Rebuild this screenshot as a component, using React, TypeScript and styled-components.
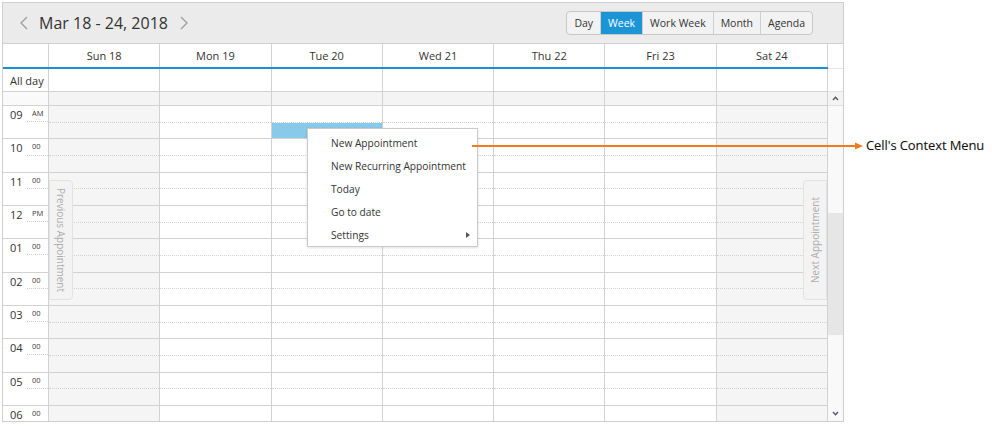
import styled, { createGlobalStyle } from "styled-components";

const GlobalStyle = createGlobalStyle`
  html, body {
    margin: 0;
    padding: 0;
    background: #fff;
  }
  body {
    font-family: "Open Sans", "Liberation Sans", sans-serif;
    color: #333;
  }
  * {
    box-sizing: border-box;
  }
`;

const days = ["Sun 18", "Mon 19", "Tue 20", "Wed 21", "Thu 22", "Fri 23", "Sat 24"];
const views = ["Day", "Week", "Work Week", "Month", "Agenda"];
const hours = [
  { h: "09", s: "AM" },
  { h: "10", s: "00" },
  { h: "11", s: "00" },
  { h: "12", s: "PM" },
  { h: "01", s: "00" },
  { h: "02", s: "00" },
  { h: "03", s: "00" },
  { h: "04", s: "00" },
  { h: "05", s: "00" },
  { h: "06", s: "00" },
];
const menuItems = ["New Appointment", "New Recurring Appointment", "Today", "Go to date", "Settings"];

const isWeekend = (i: number) => i === 0 || i === 6;

// Whole picture.
const Page = styled.div`
  position: relative;
  width: 992px;
  height: 426px;
  padding: 2px 0 0 2px;
  overflow: hidden;
`;

// Scheduler frame.
const Scheduler = styled.div`
  width: 842px;
  height: 420px;
  border: 1px solid #cfcfcf;
  display: flex;
  flex-direction: column;
  overflow: hidden;
`;

// Top toolbar with date range and view switcher.
const Toolbar = styled.div`
  flex: none;
  height: 41px;
  background: #ebebeb;
  border-bottom: 1px solid #d0d0d0;
  display: flex;
  align-items: center;
  justify-content: space-between;
  padding: 0 30px 0 17px;
`;

const DateNav = styled.div`
  display: flex;
  align-items: center;
  gap: 11px;
`;

const NavArrow = styled.svg`
  width: 8px;
  height: 14px;
  display: block;
`;

const DateTitle = styled.div`
  font-size: 16px;
  color: #333;
  margin-right: 1px;
`;

const ViewGroup = styled.div`
  display: flex;
  height: 24px;
  border: 1px solid #c8c8c8;
  border-radius: 4px;
  overflow: hidden;
  background: #f2f2f2;
`;

const ViewButton = styled.div<{ $active?: boolean }>`
  display: flex;
  align-items: center;
  padding: 0 7px;
  font-size: 10.5px;
  color: ${(p) => (p.$active ? "#fff" : "#333")};
  background: ${(p) => (p.$active ? "#1b95d6" : "transparent")};
  border-left: 1px solid #cfcfcf;
  &:first-child {
    border-left: 0;
  }
`;

// A horizontal band: day grid + gutter for the scrollbar.
const Band = styled.div<{ $height: number }>`
  flex: none;
  height: ${(p) => p.$height}px;
  display: flex;
`;

const DayGrid = styled.div<{ $line?: string }>`
  width: 825px;
  display: grid;
  grid-template-columns: 46px repeat(7, 1fr);
  border-bottom: ${(p) => p.$line ?? "1px solid #d2d2d2"};
`;

const Gutter = styled.div<{ $bg?: string }>`
  flex: 1;
  background: ${(p) => p.$bg ?? "#fff"};
  display: flex;
  justify-content: center;
  align-items: center;
  border-bottom: 1px solid #e2e2e2;
`;

const Cell = styled.div<{ $bg?: string }>`
  border-right: 1px solid #d2d2d2;
  background: ${(p) => p.$bg ?? "#fff"};
`;

const HeadCell = styled(Cell)`
  display: flex;
  align-items: center;
  justify-content: center;
  font-size: 11px;
  color: #333;
`;

const AllDayLabel = styled(Cell)`
  display: flex;
  align-items: center;
  padding-left: 7px;
  font-size: 11px;
  color: #333;
`;

// Scrolling body with the hour rows.
const Body = styled.div`
  flex: 1;
  display: flex;
  overflow: hidden;
`;

const Hours = styled.div`
  width: 825px;
  display: flex;
  flex-direction: column;
`;

const HourRow = styled.div`
  flex: none;
  height: 33.333px;
  display: grid;
  grid-template-columns: 46px repeat(7, 1fr);
  border-bottom: 1px solid #d2d2d2;
`;

const TimeCell = styled.div`
  border-right: 1px solid #d2d2d2;
  display: flex;
  flex-direction: column;
`;

const TimeTop = styled.div`
  flex: 1;
  display: flex;
`;

const HourNum = styled.span`
  width: 24px;
  padding: 2px 0 0 7px;
  font-size: 11px;
  line-height: 14px;
  color: #333;
`;

const HourSuffix = styled.span`
  flex: 1;
  padding: 3px 0 0 5px;
  font-size: 7.5px;
  line-height: 8px;
  color: #3a3a3a;
  border-bottom: 1px dotted #cfcfcf;
`;

const DayCell = styled.div<{ $bg?: string }>`
  border-right: 1px solid #d2d2d2;
  background: ${(p) => p.$bg ?? "#fff"};
  display: flex;
  flex-direction: column;
`;

const Slot = styled.div<{ $first?: boolean; $selected?: boolean }>`
  flex: 1;
  border-bottom: ${(p) => (p.$first ? "1px dotted #d2d2d2" : "0")};
  background: ${(p) => (p.$selected ? "#89c9e9" : "transparent")};
`;

const Scrollbar = styled.div`
  flex: 1;
  display: flex;
  flex-direction: column;
  background: #f9f9f9;
`;

const Track = styled.div<{ $h: number; $thumb?: boolean }>`
  flex: none;
  height: ${(p) => p.$h}px;
  background: ${(p) => (p.$thumb ? "#e6e6e6" : "transparent")};
`;

const ScrollButton = styled.div`
  flex: 1;
  display: flex;
  align-items: center;
  justify-content: center;
`;

// Vertical "previous / next appointment" tabs on the canvas.
const SideTab = styled.div<{ $left: number; $side: "prev" | "next" }>`
  position: absolute;
  left: ${(p) => p.$left}px;
  top: 180px;
  width: 24px;
  height: 120px;
  background: #f3f3f3;
  border: 1px solid #e2e2e2;
  border-radius: ${(p) => (p.$side === "prev" ? "0 4px 4px 0" : "4px 0 0 4px")};
  display: flex;
  align-items: center;
  justify-content: center;
`;

const SideText = styled.span<{ $side: "prev" | "next" }>`
  white-space: nowrap;
  font-size: 10px;
  color: #adadad;
  transform: rotate(${(p) => (p.$side === "prev" ? "90deg" : "-90deg")});
`;

// Context menu over the cell.
const Menu = styled.div`
  position: absolute;
  left: 307px;
  top: 128px;
  width: 171px;
  height: 119px;
  background: #fff;
  border: 1px solid #cacaca;
  box-shadow: 0 1px 3px rgba(0, 0, 0, 0.12);
  padding-top: 2px;
`;

const MenuItem = styled.div`
  height: 23px;
  display: flex;
  align-items: center;
  justify-content: space-between;
  padding: 0 7px 0 23px;
  font-size: 10.2px;
  white-space: nowrap;
  color: #333;
`;

const SubArrow = styled.span`
  width: 0;
  height: 0;
  border-top: 3px solid transparent;
  border-bottom: 3px solid transparent;
  border-left: 4px solid #555;
`;

// Annotation arrow and label.
const Pointer = styled.svg`
  position: absolute;
  left: 472px;
  top: 141px;
  width: 392px;
  height: 10px;
`;

const Callout = styled.div`
  position: absolute;
  left: 866px;
  top: 136px;
  font-size: 13px;
  letter-spacing: -0.1px;
  color: #111;
  white-space: nowrap;
  text-shadow: 0 0 1px rgba(0, 0, 0, 0.15);
`;

const Chevron = ({ dir }: { dir: "left" | "right" }) => (
  <NavArrow viewBox="0 0 8 14">
    <polyline
      points={dir === "left" ? "7,1 1,7 7,13" : "1,1 7,7 1,13"}
      fill="none"
      stroke="#9a9a9a"
      strokeWidth="1.2"
    />
  </NavArrow>
);

export default function App() {
  return (
    <Page>
      <GlobalStyle />
      <Scheduler>
        <Toolbar>
          <DateNav>
            <Chevron dir="left" />
            <DateTitle>Mar 18 - 24, 2018</DateTitle>
            <Chevron dir="right" />
          </DateNav>
          <ViewGroup>
            {views.map((v) => (
              <ViewButton key={v} $active={v === "Week"}>
                {v}
              </ViewButton>
            ))}
          </ViewGroup>
        </Toolbar>

        <Band $height={25}>
          <DayGrid $line="2px solid #1a8fd6">
            <Cell />
            {days.map((d) => (
              <HeadCell key={d}>{d}</HeadCell>
            ))}
          </DayGrid>
          <Gutter />
        </Band>

        <Band $height={23}>
          <DayGrid>
            <AllDayLabel>All day</AllDayLabel>
            {days.map((d) => (
              <Cell key={d} />
            ))}
          </DayGrid>
          <Gutter />
        </Band>

        <Band $height={14}>
          <DayGrid>
            <Cell $bg="#fafafa" />
            {days.map((d) => (
              <Cell key={d} $bg="#f4f4f4" />
            ))}
          </DayGrid>
          <Gutter $bg="#f4f4f4">
            <svg width="7" height="5" viewBox="0 0 7 5">
              <polyline points="1,4 3.5,1.2 6,4" fill="none" stroke="#555" strokeWidth="1.3" />
            </svg>
          </Gutter>
        </Band>

        <Body>
          <Hours>
            {hours.map((hr, r) => (
              <HourRow key={hr.h}>
                <TimeCell>
                  <TimeTop>
                    <HourNum>{hr.h}</HourNum>
                    <HourSuffix>{hr.s}</HourSuffix>
                  </TimeTop>
                  <TimeTop />
                </TimeCell>
                {days.map((d, i) => (
                  <DayCell key={d} $bg={isWeekend(i) ? "#f5f5f5" : "#fff"}>
                    <Slot $first />
                    <Slot $selected={r === 0 && i === 2} />
                  </DayCell>
                ))}
              </HourRow>
            ))}
          </Hours>
          <Scrollbar>
            <Track $h={107} />
            <Track $h={122} $thumb />
            <Track $h={70} />
            <ScrollButton>
              <svg width="7" height="5" viewBox="0 0 7 5">
                <polyline points="1,1 3.5,3.8 6,1" fill="none" stroke="#4a5a70" strokeWidth="1.3" />
              </svg>
            </ScrollButton>
          </Scrollbar>
        </Body>
      </Scheduler>

      <SideTab $left={49} $side="prev">
        <SideText $side="prev">Previous Appointment</SideText>
      </SideTab>
      <SideTab $left={803} $side="next">
        <SideText $side="next">Next Appointment</SideText>
      </SideTab>

      <Menu>
        {menuItems.map((m) => (
          <MenuItem key={m}>
            {m}
            {m === "Settings" && <SubArrow />}
          </MenuItem>
        ))}
      </Menu>

      <Pointer viewBox="0 0 392 10">
        <line x1="0" y1="5" x2="385" y2="5" stroke="#f27a1e" strokeWidth="1.8" />
        <polygon points="383,1.5 391,5 383,8.5" fill="#f27a1e" />
      </Pointer>
      <Callout>Cell's Context Menu</Callout>
    </Page>
  );
}
